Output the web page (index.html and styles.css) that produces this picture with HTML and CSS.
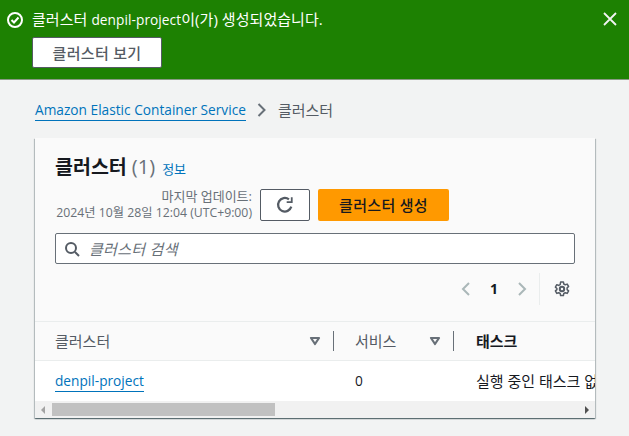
FILE: index.html
```html
<!DOCTYPE html>
<html lang="ko">
<head>
  <meta charset="UTF-8" />
  <title>클러스터</title>
  <link rel="stylesheet" href="styles.css">
</head>
<body>
  <div class="flash">
    <div class="flash-main">
      <div class="flash-msg">
        <svg class="flash-icon" width="16" height="16" viewBox="0 0 16 16" fill="none" stroke="#fff" stroke-width="2">
          <circle cx="8" cy="8" r="7"/>
          <path d="M4.5 8l2.5 2.5 4.5-5"/>
        </svg>
        <span>클러스터 <span class="latin">denpil-project</span>이(가) 생성되었습니다.</span>
      </div>
      <button class="flash-btn" type="button">클러스터 보기</button>
    </div>
    <svg class="flash-close" width="16" height="16" viewBox="0 0 16 16" fill="none" stroke="#f2f3f3" stroke-width="1.8">
      <path d="M2 2l12 12M14 2L2 14"/>
    </svg>
  </div>

  <nav class="crumbs">
    <a class="link" href="#">Amazon Elastic Container Service</a>
    <svg width="16" height="16" viewBox="0 0 16 16" fill="none" stroke="#687078" stroke-width="2">
      <path d="M4.5 2l6 6-6 6"/>
    </svg>
    <span class="crumb-current">클러스터</span>
  </nav>

  <section class="card">
    <div class="card-head">
      <h1 class="title">클러스터 <span class="count">(1)</span> <a class="info" href="#">정보</a></h1>
      <div class="actions">
        <div class="updated">
          <div class="updated-label">마지막 업데이트:</div>
          <div>2024년 10월 28일 12:04 (UTC+9:00)</div>
        </div>
        <button class="btn-refresh" type="button" aria-label="새로 고침">
          <svg width="18" height="18" viewBox="0 0 16 16" fill="none" stroke="#545b64" stroke-width="2">
            <path d="M13.6 9.5A6 6 0 1 1 11.5 3"/>
            <path d="M14 1v4.5H9.5" stroke-width="1.6"/>
          </svg>
        </button>
        <button class="btn-primary" type="button">클러스터 생성</button>
      </div>
      <div class="search">
        <svg width="16" height="16" viewBox="0 0 16 16" fill="none" stroke="#545b64" stroke-width="2">
          <circle cx="7" cy="7" r="5"/>
          <path d="M11 11l4 4"/>
        </svg>
        <span class="placeholder">클러스터 검색</span>
      </div>
      <div class="pager">
        <svg width="16" height="16" viewBox="0 0 16 16" fill="none" stroke="#aab7b8" stroke-width="2">
          <path d="M11 2L5 8l6 6"/>
        </svg>
        <span class="page-num">1</span>
        <svg width="16" height="16" viewBox="0 0 16 16" fill="none" stroke="#aab7b8" stroke-width="2">
          <path d="M5 2l6 6-6 6"/>
        </svg>
        <span class="pager-div"></span>
        <svg width="16" height="16" viewBox="0 0 16 16" fill="none" stroke="#545b64" stroke-width="2">
          <circle cx="8" cy="8" r="2.2"/>
          <path d="M6.6 1h2.8l.4 2 1.5.8 1.9-.7 1.4 2.4-1.5 1.4v1.7l1.5 1.3-1.4 2.5-1.9-.7-1.5.8-.4 2H6.6l-.4-2-1.5-.8-1.9.7-1.4-2.5 1.5-1.3V7.5L1.4 6.1l1.4-2.4 1.9.7 1.5-.8z" stroke-width="1.5" stroke-linejoin="round"/>
        </svg>
      </div>
    </div>

    <div class="table-wrap">
      <div class="row row-head">
        <div class="col col-name">
          <span>클러스터</span>
          <svg class="sort" width="12" height="10" viewBox="0 0 12 10" fill="none" stroke="#687078" stroke-width="2.2" stroke-linejoin="round">
            <path d="M2 2h8L6 8z"/>
          </svg>
        </div>
        <div class="col col-svc">
          <span>서비스</span>
          <svg class="sort" width="12" height="10" viewBox="0 0 12 10" fill="none" stroke="#687078" stroke-width="2.2" stroke-linejoin="round">
            <path d="M2 2h8L6 8z"/>
          </svg>
        </div>
        <div class="col col-task"><b>태스크</b></div>
      </div>
      <div class="row row-body">
        <div class="col col-name"><a class="link" href="#">denpil-project</a></div>
        <div class="col col-svc"><span class="latin">0</span></div>
        <div class="col col-task">실행 중인 태스크 없음</div>
      </div>
    </div>

    <div class="scrollbar">
      <span class="arrow arrow-left"></span>
      <div class="track"><div class="thumb"></div></div>
      <span class="arrow arrow-right"></span>
    </div>
  </section>
</body>
</html>
```

FILE: styles.css
```css
/* General */
body {
  margin: 0;
  height: 436px;
  overflow: hidden;
  background-color: #f2f3f3;
  color: #16191f;
  font-family: "Open Sans", "Noto Sans CJK KR", sans-serif;
  font-size: 15px;
  line-height: 20px;
}

.latin {
  font-size: 13.7px;
}

.link {
  color: #0073bb;
  font-size: 13.7px;
  text-decoration: none;
  border-bottom: 1px solid #0073bb;
}

/* Flash bar */
.flash {
  display: flex;
  justify-content: space-between;
  height: 80px;
  padding: 9px 11px 0 7px;
  box-sizing: border-box;
  background-color: #1d8102;
  border-bottom: 1px solid #8a9a85;
  color: #fff;
}

.flash-msg {
  display: flex;
  align-items: center;
  gap: 9px;
  margin-bottom: 7px;
  letter-spacing: 0.06px;
}

.flash-icon {
  flex: none;
}

.flash-btn {
  display: block;
  width: 130px;
  height: 31px;
  margin-left: 25px;
  padding: 0;
  background-color: #fff;
  border: 1px solid #545b64;
  border-radius: 2px;
  color: #545b64;
  font: inherit;
  font-weight: 500;
  letter-spacing: 0.3px;
}

.flash-close {
  margin-top: 2px;
}

/* Breadcrumbs */
.crumbs {
  display: flex;
  align-items: center;
  gap: 8px;
  margin: 20px 0 0 35px;
  height: 20px;
}

.crumb-current {
  color: #545b64;
}

/* Card */
.card {
  width: 560px;
  margin: 18px 0 0 35px;
  background-color: #fafafa;
  box-shadow: 0 1px 1px 0 rgba(0, 28, 36, 0.4), 1px 1px 1px 0 rgba(0, 28, 36, 0.2), -1px 1px 1px 0 rgba(0, 28, 36, 0.2);
}

.card-head {
  padding: 17px 20px 0 20px;
}

.title {
  margin: 0;
  font-size: 19.5px;
  line-height: 24px;
  font-weight: 700;
}

.count {
  color: #687078;
  font-size: 20px;
  font-weight: 400;
}

.info {
  margin-left: 2px;
  color: #0073bb;
  font-size: 13px;
  font-weight: 400;
  text-decoration: none;
}

.actions {
  display: flex;
  align-items: center;
  gap: 8px;
  margin-top: 7px;
}

.updated {
  width: 197px;
  color: #687078;
  font-size: 12.25px;
  line-height: 16px;
  text-align: right;
  white-space: nowrap;
}

.updated-label {
  font-size: 13px;
  line-height: 17px;
}

.btn-refresh {
  display: flex;
  align-items: center;
  justify-content: center;
  width: 50px;
  height: 32px;
  padding: 0;
  background-color: #fff;
  border: 1px solid #545b64;
  border-radius: 2px;
}

.btn-primary {
  width: 131px;
  height: 32px;
  padding: 0;
  background-color: #ff9900;
  border: none;
  border-radius: 2px;
  color: #16191f;
  font: inherit;
  font-weight: 500;
  letter-spacing: 0.3px;
}

.search {
  display: flex;
  align-items: center;
  gap: 9px;
  height: 31px;
  margin-top: 12px;
  padding-left: 8px;
  background-color: #fff;
  border: 1px solid #687078;
  border-radius: 2px;
  box-sizing: border-box;
}

.placeholder {
  color: #687078;
  font-style: italic;
  letter-spacing: 0.3px;
}

/* Pagination */
.pager {
  display: flex;
  align-items: center;
  justify-content: flex-end;
  height: 32px;
  margin-top: 9px;
  padding-right: 5px;
}

.page-num {
  width: 40px;
  font-size: 14px;
  text-align: center;
  font-weight: 700;
}

.pager-div {
  width: 1px;
  height: 32px;
  margin: 0 14px 0 9px;
  background-color: #eaeded;
}

/* Table */
.table-wrap {
  margin-top: 16px;
  border-top: 1px solid #eaeded;
  overflow: hidden;
}

.row {
  display: flex;
  width: 700px;
}

.row-head {
  height: 38px;
  border-bottom: 1px solid #eaeded;
  color: #545b64;
}

.row-head b {
  color: #16191f;
  font-weight: 700;
}

.row-body {
  height: 40px;
  background-color: #fff;
}

.col {
  display: flex;
  align-items: center;
  justify-content: space-between;
  box-sizing: border-box;
  white-space: nowrap;
}

.col-name {
  width: 299px;
  padding: 0 13px 0 20px;
}

.col-svc {
  width: 120px;
  padding: 0 13px 0 21px;
}

.col-task {
  padding-left: 22px;
}

.row-head .col-name,
.row-head .col-svc {
  position: relative;
}

.row-head .col-name::after,
.row-head .col-svc::after {
  content: "";
  position: absolute;
  right: 0;
  top: 9px;
  height: 20px;
  width: 1px;
  background-color: #687078;
}

/* Scrollbar */
.scrollbar {
  display: flex;
  align-items: center;
  height: 17px;
  background-color: #f1f1f1;
}

.track {
  flex: 1;
  padding-left: 1px;
}

.thumb {
  width: 223px;
  height: 13px;
  background-color: #c1c1c1;
}

.arrow {
  width: 0;
  height: 0;
  margin: 0 6px;
  border-style: solid;
  border-width: 4px;
  border-color: transparent;
}

.arrow-left {
  margin-right: 6px;
  border-left-width: 0;
  border-right-color: #a3a3a3;
}

.arrow-right {
  border-right-width: 0;
  border-left-color: #505050;
}
```
